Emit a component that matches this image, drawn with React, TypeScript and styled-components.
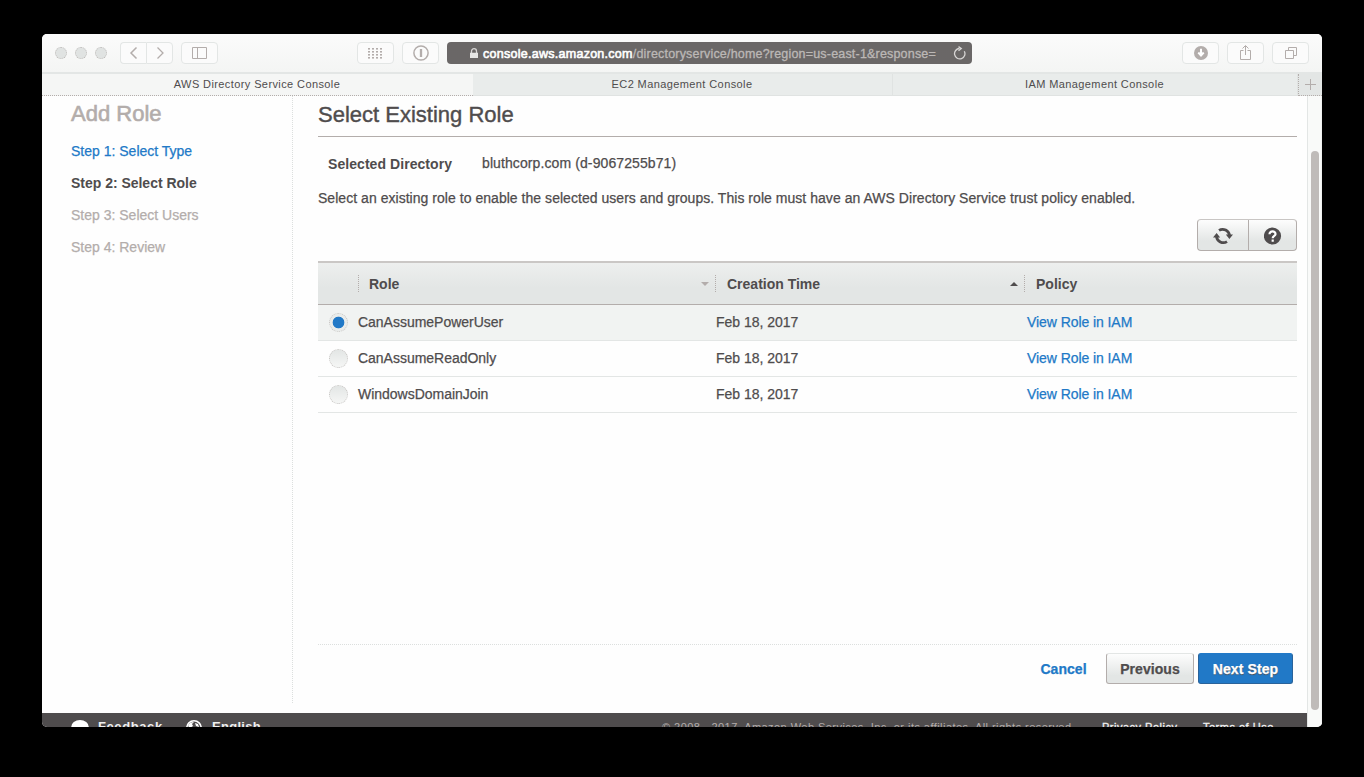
import React, { useState } from 'react';
import styled, { createGlobalStyle, css } from 'styled-components';

const ink = '#4f4c4d';
const blue = '#2179c7';
const grey = '#b3adab';
const line = '#e3e6e5';

const Global = createGlobalStyle`
  * { box-sizing: border-box; }
  html, body { margin: 0; background: #000; }
  body { font-family: "Liberation Sans", Arial, sans-serif; font-size: 14px; color: ${ink}; }
  button { font-family: inherit; padding: 0; cursor: pointer; }
  a { color: inherit; text-decoration: none; }
`;

const Desktop = styled.div`
  height: 777px;
  padding: 34px 42px 50px;
  background: #000;
  overflow: hidden;
`;
const Window = styled.div`
  width: 1280px;
  height: 693px;
  border-radius: 5px;
  overflow: hidden;
  background: #fefefe;
  display: flex;
  flex-direction: column;
`;

/* Browser chrome */
const Toolbar = styled.div`
  flex: none;
  height: 38px;
  padding: 0 13px;
  display: flex;
  align-items: center;
  background: linear-gradient(#fbfbfb, #f4f5f4);
`;
const Lights = styled.div`
  display: flex;
  gap: 8px;
  width: 65px;
`;
const Light = styled.span`
  width: 12px;
  height: 12px;
  border-radius: 50%;
  background: #e0e3e2;
  border: 1px dotted #bdbab8;
`;
const ToolButton = styled.button<{ $w?: number; $gap?: number; $side?: 'left' | 'right' }>`
  flex: none;
  width: ${p => p.$w ?? 37}px;
  height: 22px;
  margin-right: ${p => p.$gap ?? 8}px;
  border: 1px solid ${line};
  border-radius: 4px;
  ${p => p.$side === 'left' && css`border-radius: 4px 0 0 4px; border-right: 0;`}
  ${p => p.$side === 'right' && css`border-radius: 0 4px 4px 0;`}
  background: #fbfbfb;
  color: ${grey};
  display: flex;
  align-items: center;
  justify-content: center;
  svg { display: block; }
`;
const Address = styled.div`
  flex: none;
  width: 525px;
  height: 22px;
  margin-right: 210px;
  padding: 0 6px 0 22px;
  border-radius: 4px;
  display: flex;
  align-items: center;
  background-color: ${ink};
  background-image: radial-gradient(circle at 1px 1px, #8a8685 0.6px, transparent 0.8px);
  background-size: 2px 2px;
  color: #bcb8b6;
  font-size: 12.5px;
  -webkit-text-stroke: 0.3px currentColor;
  white-space: nowrap;
`;
const Url = styled.span`
  flex: 1;
  margin-left: 4px;
  padding-top: 1px;
  letter-spacing: 0.19px;
  b { color: #fff; font-weight: 400; -webkit-text-stroke: 0.6px #fff; letter-spacing: 0.27px; }
`;
const Tabs = styled.div`
  flex: none;
  height: 24px;
  display: flex;
  border-top: 2px solid ${line};
`;
const Tab = styled.div<{ $w: number; $active?: boolean }>`
  width: ${p => p.$w}px;
  padding: 0 1px 2px 0;
  display: flex;
  align-items: center;
  justify-content: center;
  background: ${p => (p.$active ? '#f5f6f5' : '#e9eceb')};
  border-right: ${p => (p.$active ? 0 : 1)}px solid #e0e3e2;
  border-bottom: 1px ${p => (p.$active ? 'dotted #b3adab' : 'solid #e0e3e2')};
  font-size: 11px;
  letter-spacing: 0.4px;
  white-space: nowrap;
`;
const NewTab = styled.div`
  flex: 1;
  display: flex;
  align-items: center;
  justify-content: center;
  padding-bottom: 1px;
  border: 1px dotted ${grey};
  border-width: 0 0 1px 1px;
  background: ${line};
  color: ${grey};
`;

/* Page */
const Viewport = styled.div`
  flex: 1;
  min-height: 0;
  display: flex;
`;
const Page = styled.div`
  width: 1265px;
  display: flex;
  flex-direction: column;
`;
const ScrollTrack = styled.div`
  flex: 1;
  border-left: 1px solid ${line};
  border-right: 1px solid #f0f1f0;
  padding: 55px 2px 0 3px;
  background: #f9faf9;
`;
const Thumb = styled.div`
  width: 8px;
  height: 559px;
  border-radius: 4px;
  background: #bfbbb9;
`;
const Wizard = styled.div`
  height: 617px;
  display: flex;
`;
const Steps = styled.nav`
  width: 251px;
  height: 607px;
  padding: 5px 0 0 29px;
  border-right: 1px dotted #dcdfde;
`;
const StepsTitle = styled.h2`
  margin: 0 0 12px;
  font-size: 22px;
  font-weight: 400;
  line-height: 26px;
  color: ${grey};
  -webkit-text-stroke: 0.6px ${grey};
`;
const Step = styled.div<{ $state: 'done' | 'current' | 'todo' }>`
  height: 32px;
  line-height: 24px;
  letter-spacing: ${p => (p.$state === 'current' ? -0.02 : 0)}px;
  font-weight: ${p => (p.$state === 'current' ? 700 : 400)};
  color: ${p => (p.$state === 'done' ? blue : p.$state === 'current' ? ink : grey)};
  -webkit-text-stroke: ${p => (p.$state === 'current' ? 0 : 0.25)}px currentColor;
`;
const Main = styled.main`
  width: 1004px;
  padding: 0 0 0 25px;
  margin-right: 10px;
  display: flex;
  flex-direction: column;
  -webkit-text-stroke: 0.25px currentColor;
`;
const Title = styled.h1`
  margin: 0;
  height: 41px;
  padding-top: 6px;
  border-bottom: 1px solid ${grey};
  font-size: 22px;
  font-weight: 400;
  line-height: 26px;
  -webkit-text-stroke: 0.4px ${ink};
`;
const Directory = styled.div`
  display: flex;
  height: 49px;
  padding: 17px 0 0 10px;
  line-height: 18px;
  letter-spacing: 0.1px;
  b { width: 154px; padding-top: 1px; letter-spacing: 0.06px; -webkit-text-stroke: 0; }
`;
const Intro = styled.p`
  margin: 0;
  height: 33px;
  line-height: 24px;
  letter-spacing: 0.037px;
  white-space: nowrap;
`;
const Actions = styled.div`
  display: flex;
  justify-content: flex-end;
  height: 42px;
`;
const ActionButton = styled.button<{ $w: number; $first?: boolean }>`
  width: ${p => p.$w}px;
  height: 32px;
  border: 1px solid ${grey};
  border-top-color: #c9c6c4;
  border-radius: ${p => (p.$first ? '4px 0 0 4px' : '0 4px 4px 0')};
  ${p => p.$first && css`border-right: 0;`}
  background: linear-gradient(#fdfdfd, #e3e6e5 70%);
  color: ${ink};
  display: flex;
  align-items: center;
  justify-content: center;
  padding-top: 2px;
`;
const columns = '40px 357px 309px 273px';
const HeadRow = styled.div`
  display: grid;
  grid-template-columns: ${columns};
  align-items: center;
  height: 44px;
  border-top: 2px solid #cac7c5;
  border-bottom: 1px solid ${grey};
  background: linear-gradient(#edefee, #e3e6e5 60%);
  font-weight: 700;
  -webkit-text-stroke: 0;
`;
const HeadCell = styled.div<{ $pad?: number }>`
  height: 17px;
  padding: 0 6px 0 ${p => p.$pad ?? 10}px;
  border-left: 1px dotted ${grey};
  display: flex;
  align-items: center;
  justify-content: space-between;
  &:first-child { border: 0; }
`;
const Row = styled.div<{ $selected?: boolean }>`
  display: grid;
  grid-template-columns: ${columns};
  align-items: center;
  height: 36px;
  border-bottom: 1px solid ${line};
  background: ${p => (p.$selected ? '#f1f3f2' : 'transparent')};
`;
const Cell = styled.div<{ $pad?: number }>`
  padding: 0 0 1px ${p => p.$pad ?? 0}px;
  letter-spacing: -0.02px;
`;
const RoleLink = styled.a`
  padding: 0 0 1px 3px;
  letter-spacing: -0.07px;
  color: ${blue};
`;
const Radio = styled.button<{ $on: boolean }>`
  display: block;
  width: 19px;
  height: 19px;
  margin-left: 11px;
  border: 1px dotted #c9c6c4;
  border-radius: 50%;
  background: ${p => (p.$on ? `radial-gradient(circle, ${blue} 5.5px, #e9eceb 6.2px)` : 'linear-gradient(#e3e6e5, #f5f6f5)')};
`;
const Controls = styled.div`
  margin-top: auto;
  height: 69px;
  padding: 8px 4px 0 0;
  border-top: 1px dotted #dcdfde;
  display: flex;
  justify-content: flex-end;
  align-items: flex-start;
`;
const Control = styled.button<{ $kind: 'link' | 'plain' | 'primary' }>`
  height: 31px;
  border-radius: 3px;
  font-size: 14px;
  font-weight: 700;
  letter-spacing: 0.05px;
  ${p => p.$kind === 'link' && css`width: 48px; margin-right: 18.500px; border: 0; background: none; color: ${blue};`}
  ${p => p.$kind === 'plain' && css`width: 88px; margin-right: 4px; border: 1px solid ${grey}; border-top-color: ${line}; background: linear-gradient(#fdfdfd, #e3e6e5 75%); color: ${ink};`}
  ${p => p.$kind === 'primary' && css`width: 95px; border: 1px solid #2a639a; border-top-color: ${blue}; background: ${blue}; color: #fff; letter-spacing: 0.1px; text-shadow: 0 1px 1px ${ink};`}
`;
const Footer = styled.footer`
  height: 14px;
  overflow: hidden;
  display: flex;
  align-items: flex-start;
  padding: 6px 0 0 29px;
  background: ${ink};
  line-height: 16px;
  white-space: nowrap;
  svg { flex: none; margin-top: 1px; }
`;
const FooterItem = styled.span<{ $w: number; $size?: number; $ls?: number; $bold?: boolean; $dim?: boolean }>`
  flex: none;
  width: ${p => p.$w}px;
  font-size: ${p => p.$size ?? 11}px;
  letter-spacing: ${p => p.$ls ?? 0}px;
  font-weight: ${p => (p.$bold ? 700 : 400)};
  color: ${p => (p.$dim ? grey : '#f0f0f0')};
  -webkit-text-stroke: ${p => (p.$dim || p.$bold ? 0 : 0.3)}px currentColor;
`;
const Globe = styled.svg`
  margin-right: 10px;
`;
const Bubble = styled.svg`
  margin-right: 9px;
`;

const roles = ['CanAssumePowerUser', 'CanAssumeReadOnly', 'WindowsDomainJoin'];

export default function App() {
  const [selected, setSelected] = useState(0);
  return (
    <Desktop>
      <Global />
      <Window>
        <Toolbar>
          <Lights><Light /><Light /><Light /></Lights>
          <ToolButton $w={26} $gap={0} $side="left">
            <svg width="12" height="14" fill="none" stroke="currentColor" strokeWidth="1.5"><path d="M8.500 1.500 3 7l5.500 5.500" /></svg>
          </ToolButton>
          <ToolButton $w={27} $side="right">
            <svg width="12" height="14" fill="none" stroke="currentColor" strokeWidth="1.300"><path d="M3.500 1.500 9 7l-5.500 5.500" /></svg>
          </ToolButton>
          <ToolButton $gap={139}>
            <svg width="15" height="12" fill="none" stroke="currentColor"><path d="M.5.5h14v11H.5zM5.500.5v11" /></svg>
          </ToolButton>
          <ToolButton>
            <svg width="15" height="11" fill="currentColor">
              {[0, 4, 8, 12].map(x => [0, 3, 6, 9].map(y => <rect key={`${x}-${y}`} x={x} y={y} width="2" height="1.600" />))}
            </svg>
          </ToolButton>
          <ToolButton>
            <svg width="16" height="16" fill="none" stroke="currentColor" strokeWidth="1.500"><circle cx="8" cy="8" r="7.100" /><path d="M8 4v8" strokeWidth="2.300" /></svg>
          </ToolButton>
          <Address>
            <svg width="10" height="11" fill="none"><path d="M2.500 5V3.200a2.500 2.500 0 0 1 5 0V5" stroke="#d7d5d4" strokeWidth="1.300" /><path d="M1 4.800h8V10H1z" fill="#e6e6e5" /></svg>
            <Url><b>console.aws.amazon.com</b>/directoryservice/home?region=us-east-1&amp;response=</Url>
            <svg width="13" height="14" fill="none" stroke="#d7d5d4" strokeWidth="1.300"><path d="M11.300 5.200A5.200 5.200 0 1 1 6.500 2.500" /><path d="M5.500.6 8.300 2.600 5.500 4.800" /></svg>
          </Address>
          <ToolButton>
            <svg width="14" height="14"><circle cx="7" cy="7" r="7" fill="currentColor" /><path d="M7 2.800v5.600M4.300 6.500 7 9.600l2.700-3.100" fill="none" stroke="#fff" strokeWidth="2" /></svg>
          </ToolButton>
          <ToolButton>
            <svg width="13" height="16" fill="none" stroke="currentColor"><path d="M4.500 5.500h-3v9h10v-9h-3M6.500 10V1M3.500 3.500l3-3 3 3" /></svg>
          </ToolButton>
          <ToolButton $gap={0}>
            <svg width="12" height="12" fill="none" stroke="currentColor"><path d="M.5 3.500h8v8h-8zM3.500 3V.5h8v8H9" /></svg>
          </ToolButton>
        </Toolbar>
        <Tabs>
          <Tab $w={431} $active>AWS Directory Service Console</Tab>
          <Tab $w={420}>EC2 Management Console</Tab>
          <Tab $w={405}>IAM Management Console</Tab>
          <NewTab><svg width="11" height="11" stroke="currentColor"><path d="M5.500 0v11M0 5.500h11" /></svg></NewTab>
        </Tabs>
        <Viewport>
          <Page>
            <Wizard>
              <Steps>
                <StepsTitle>Add Role</StepsTitle>
                <Step $state="done">Step 1: Select Type</Step>
                <Step $state="current">Step 2: Select Role</Step>
                <Step $state="todo">Step 3: Select Users</Step>
                <Step $state="todo">Step 4: Review</Step>
              </Steps>
              <Main>
                <Title>Select Existing Role</Title>
                <Directory><b>Selected Directory</b><span>bluthcorp.com (d-9067255b71)</span></Directory>
                <Intro>Select an existing role to enable the selected users and groups. This role must have an AWS Directory Service trust policy enabled.</Intro>
                <Actions>
                  <ActionButton $w={51} $first>
                    <svg width="20" height="18" fill="none" stroke="currentColor" strokeWidth="2.800">
                      <path d="M6 3.400a6.900 6.900 0 0 1 10.500 5.200M14 14.600a6.900 6.900 0 0 1-10.500-5.200" />
                      <path d="M12.800 7.500h7.200l-3.600 4.500zM0 10.500h7.200L3.600 6z" fill="currentColor" stroke="none" />
                    </svg>
                  </ActionButton>
                  <ActionButton $w={49}>
                    <svg width="18" height="18"><circle cx="8.500" cy="9" r="8.600" fill="currentColor" /><path d="M5.500 7.200c0-4 6.200-3.500 6 0C11.400 9 8.700 8.800 8.700 11.300M8.700 12.500v2.200" fill="none" stroke="#fff" strokeWidth="2.200" /></svg>
                  </ActionButton>
                </Actions>
                <HeadRow>
                  <HeadCell />
                  <HeadCell>Role<svg width="8" height="4"><path d="M0 0h8L4 4z" fill={grey} /></svg></HeadCell>
                  <HeadCell $pad={11}>Creation Time<svg width="8" height="4"><path d="M0 4h8L4 0z" fill={ink} /></svg></HeadCell>
                  <HeadCell $pad={11}>Policy</HeadCell>
                </HeadRow>
                {roles.map((role, i) => (
                  <Row key={role} $selected={i === selected}>
                    <Radio $on={i === selected} aria-label={role} onClick={() => setSelected(i)} />
                    <Cell>{role}</Cell>
                    <Cell $pad={1}>Feb 18, 2017</Cell>
                    <RoleLink href="#">View Role in IAM</RoleLink>
                  </Row>
                ))}
                <Controls>
                  <Control $kind="link">Cancel</Control>
                  <Control $kind="plain">Previous</Control>
                  <Control $kind="primary">Next Step</Control>
                </Controls>
              </Main>
            </Wizard>
            <Footer>
              <Bubble width="18" height="16"><ellipse cx="9" cy="7" rx="8.800" ry="7" fill="#fff" /></Bubble>
              <FooterItem $w={88} $size={13} $ls={0.6} $bold>Feedback</FooterItem>
              <Globe width="16" height="16"><circle cx="8" cy="8" r="7.200" fill={ink} stroke="#fff" strokeWidth="1.600" /><path d="M2 6c1-3 3-4 6-4l-2 2 1 2-3 2zM9 3l3 1 1 3-3-1z" fill="#fff" /></Globe>
              <FooterItem $w={450} $size={13} $ls={0.3} $bold>English</FooterItem>
              <FooterItem $w={440} $ls={0.45} $dim>© 2008 - 2017, Amazon Web Services, Inc. or its affiliates. All rights reserved.</FooterItem>
              <FooterItem $w={101} $ls={0.5}>Privacy Policy</FooterItem>
              <FooterItem $w={90} $ls={0.5}>Terms of Use</FooterItem>
            </Footer>
          </Page>
          <ScrollTrack><Thumb /></ScrollTrack>
        </Viewport>
      </Window>
    </Desktop>
  );
}
